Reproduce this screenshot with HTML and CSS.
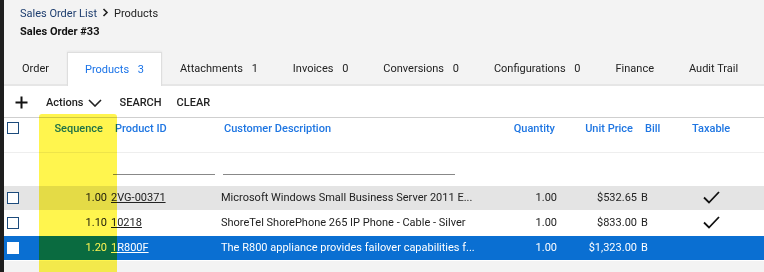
FILE: index.html
```html
<!DOCTYPE html>
<html lang="en">
<head>
  <meta charset="UTF-8" />
  <meta name="viewport" content="width=device-width, initial-scale=1.0"/>
  <title>Sales Order #33 - Products</title>
  <link rel="stylesheet" href="styles.css">
</head>
<body>

  <div class="page">
    <header class="top">
      <div class="crumbs">
        <a href="#">Sales Order List</a>
        <svg class="crumb-sep" width="7" height="9" viewBox="0 0 7 9"><path d="M1.5 1 L5 4.5 L1.5 8" fill="none" stroke="#222" stroke-width="1.6"/></svg>
        <span>Products</span>
      </div>
      <h1>Sales Order #33</h1>

      <nav class="tabs">
        <button class="tab">Order</button>
        <button class="tab active">Products <span class="count">3</span></button>
        <button class="tab">Attachments <span class="count">1</span></button>
        <button class="tab">Invoices <span class="count">0</span></button>
        <button class="tab">Conversions <span class="count">0</span></button>
        <button class="tab">Configurations <span class="count">0</span></button>
        <button class="tab">Finance</button>
        <button class="tab">Audit Trail</button>
      </nav>
    </header>

    <section class="panel">
      <div class="toolbar">
        <button class="icon-btn add">
          <svg width="13" height="13" viewBox="0 0 13 13"><path d="M6.5 0.5 V12.5 M0.5 6.5 H12.5" stroke="#111" stroke-width="2"/></svg>
        </button>
        <button class="tool actions">Actions
          <svg width="14" height="8" viewBox="0 0 14 8"><path d="M1 1 L7 7 L13 1" fill="none" stroke="#222" stroke-width="1.6"/></svg>
        </button>
        <button class="tool">SEARCH</button>
        <button class="tool">CLEAR</button>
      </div>

      <table class="grid">
        <colgroup>
          <col class="c-check">
          <col class="c-seq">
          <col class="c-pid">
          <col class="c-desc">
          <col class="c-qty">
          <col class="c-price">
          <col class="c-bill">
          <col class="c-tax">
        </colgroup>
        <thead>
          <tr class="head">
            <th><span class="box"></span></th>
            <th class="num">Sequence</th>
            <th>Product ID</th>
            <th>Customer Description</th>
            <th class="num">Quantity</th>
            <th class="num">Unit Price</th>
            <th>Bill</th>
            <th>Taxable</th>
          </tr>
          <tr class="filters">
            <td></td>
            <td></td>
            <td><span class="filter f-pid"></span></td>
            <td><span class="filter f-desc"></span></td>
            <td></td>
            <td></td>
            <td></td>
            <td></td>
          </tr>
        </thead>
        <tbody id="rows"></tbody>
      </table>
    </section>

    <div class="marker"></div>
  </div>

  <script>
    const lines = [
      { seq: "1.00", pid: "2VG-00371", desc: "Microsoft Windows Small Business Server 2011 E...", qty: "1.00", price: "$532.65", bill: "B", taxable: true },
      { seq: "1.10", pid: "10218", desc: "ShoreTel ShorePhone 265 IP Phone - Cable - Silver", qty: "1.00", price: "$833.00", bill: "B", taxable: true },
      { seq: "1.20", pid: "1R800F", desc: "The R800 appliance provides failover capabilities f...", qty: "1.00", price: "$1,323.00", bill: "B", taxable: false, selected: true }
    ];

    const check = '<svg width="17" height="13" viewBox="0 0 17 13"><path d="M1 6.5 L6 11.5 L16 1" fill="none" stroke="#111" stroke-width="1.8"/></svg>';

    const tbody = document.getElementById('rows');
    lines.forEach((l, i) => {
      const tr = document.createElement('tr');
      tr.className = 'row' + (i % 2 === 0 ? ' alt' : '') + (l.selected ? ' selected' : '');
      tr.innerHTML = `
        <td><span class="box"></span></td>
        <td class="num">${l.seq}</td>
        <td><a href="#">${l.pid}</a></td>
        <td class="desc">${l.desc}</td>
        <td class="num">${l.qty}</td>
        <td class="num">${l.price}</td>
        <td>${l.bill}</td>
        <td class="tax">${l.taxable ? check : ''}</td>`;
      tbody.appendChild(tr);
    });
  </script>

</body>
</html>
```

FILE: styles.css
```css
html, body {
  height: 100%;
}

body {
  margin: 0;
  font-family: Roboto, "Liberation Sans", Arial, sans-serif;
  font-size: 11px;
  color: #222;
  background: #f3f3f3;
  border-left: 4px solid #1e1e1e;
  overflow: hidden;
}

.page {
  position: relative;
  min-height: 100%;
}

button {
  font-family: inherit;
  font-size: 11px;
  background: none;
  border: none;
  padding: 0;
  color: #222;
  cursor: pointer;
}

/* header */

.top {
  padding-top: 7px;
}

.crumbs {
  display: flex;
  align-items: center;
  gap: 5px;
  padding-left: 16px;
  height: 14px;
  line-height: 14px;
}

.crumbs a {
  color: #1d3d6e;
  text-decoration: none;
}

.crumb-sep {
  margin-top: -3px;
}

h1 {
  margin: 4px 0 0 16px;
  font-size: 11px;
  font-weight: 700;
  line-height: 14px;
  color: #111;
}

.tabs {
  display: flex;
  margin-top: 13px;
  height: 32px;
  border-bottom: 2px solid #e6e6e6;
}

.tab {
  height: 32px;
  padding: 0 17px;
  margin-right: 1px;
  white-space: nowrap;
}

.tab:first-child {
  padding-left: 18px;
}

.tab .count {
  margin-left: 6px;
}

.tab.active {
  background: #fff;
  color: #1a73e8;
  border: 1px solid #dedede;
  border-bottom: none;
  height: 34px;
  margin-bottom: -2px;
  box-shadow: 0 -1px 2px rgba(0, 0, 0, 0.05);
}

/* panel */

.panel {
  background: #fff;
}

.toolbar {
  display: flex;
  align-items: center;
  height: 29px;
  padding-top: 2px;
  border-bottom: 1px solid #cfcfcf;
}

.icon-btn.add {
  display: flex;
  margin-left: 11px;
  margin-right: 18px;
}

.tool {
  font-weight: 500;
  margin-right: 15px;
  display: flex;
  align-items: center;
}

.tool.actions {
  gap: 4px;
  margin-right: 18px;
}

/* grid */

.grid {
  width: 100%;
  table-layout: fixed;
  border-collapse: collapse;
}

.c-check { width: 24px; }
.c-seq { width: 81px; }
.c-pid { width: 110px; }
.c-desc { width: 259px; }
.c-qty { width: 81px; }
.c-price { width: 80px; }
.c-bill { width: 41px; }

.grid th,
.grid td {
  padding: 0 2px;
  white-space: nowrap;
  overflow: hidden;
  text-overflow: ellipsis;
  text-align: left;
}

.grid .num {
  text-align: right;
}

.head th {
  height: 34px;
  vertical-align: top;
  padding-top: 4px;
  line-height: 14px;
  font-weight: 500;
  color: #1f76e2;
  border-bottom: 1px solid #eeeeee;
  box-sizing: border-box;
}

.head th:nth-child(2) { padding-right: 6px; }
.head th:nth-child(3) { padding-left: 6px; }
.head th:nth-child(4) { padding-left: 5px; }
.head th:nth-child(5) { padding-right: 4px; }
.head th:nth-child(6) { padding-right: 6px; }
.head th:nth-child(7) { padding-left: 6px; }
.head th:nth-child(8) { padding-left: 12px; }

.filters td {
  height: 33px;
  vertical-align: top;
}

.filter {
  display: block;
  margin-top: 21px;
  border-bottom: 1px solid #888;
}

.f-pid {
  margin-left: 2px;
  margin-right: 2px;
}

.f-desc {
  margin-left: 2px;
  margin-right: 21px;
}

.box {
  display: block;
  width: 10px;
  height: 10px;
  margin-left: 1px;
  border: 1.5px solid #1c4b7c;
  background: #fff;
}

.row td {
  height: 24px;
  line-height: 24px;
  border-bottom: 1px solid #fff;
  background: #fff;
}

.row .box {
  margin-top: 1px;
}

.row.alt td {
  background: #e4e4e4;
}

.row.selected td {
  background: #0a6fd2;
  color: #fff;
}

.row.selected .box {
  border-color: #fff;
}

.row a {
  color: #222;
  text-decoration: underline;
}

.row.selected a {
  color: #fff;
}

.row td.tax {
  padding-left: 23px;
}

.row td.tax svg {
  vertical-align: middle;
}

/* highlighter laid over the Sequence column */

.marker {
  position: absolute;
  left: 35px;
  top: 114px;
  width: 78px;
  height: 200px;
  background: #fff54e;
  mix-blend-mode: multiply;
  border-radius: 3px;
  pointer-events: none;
}
```
